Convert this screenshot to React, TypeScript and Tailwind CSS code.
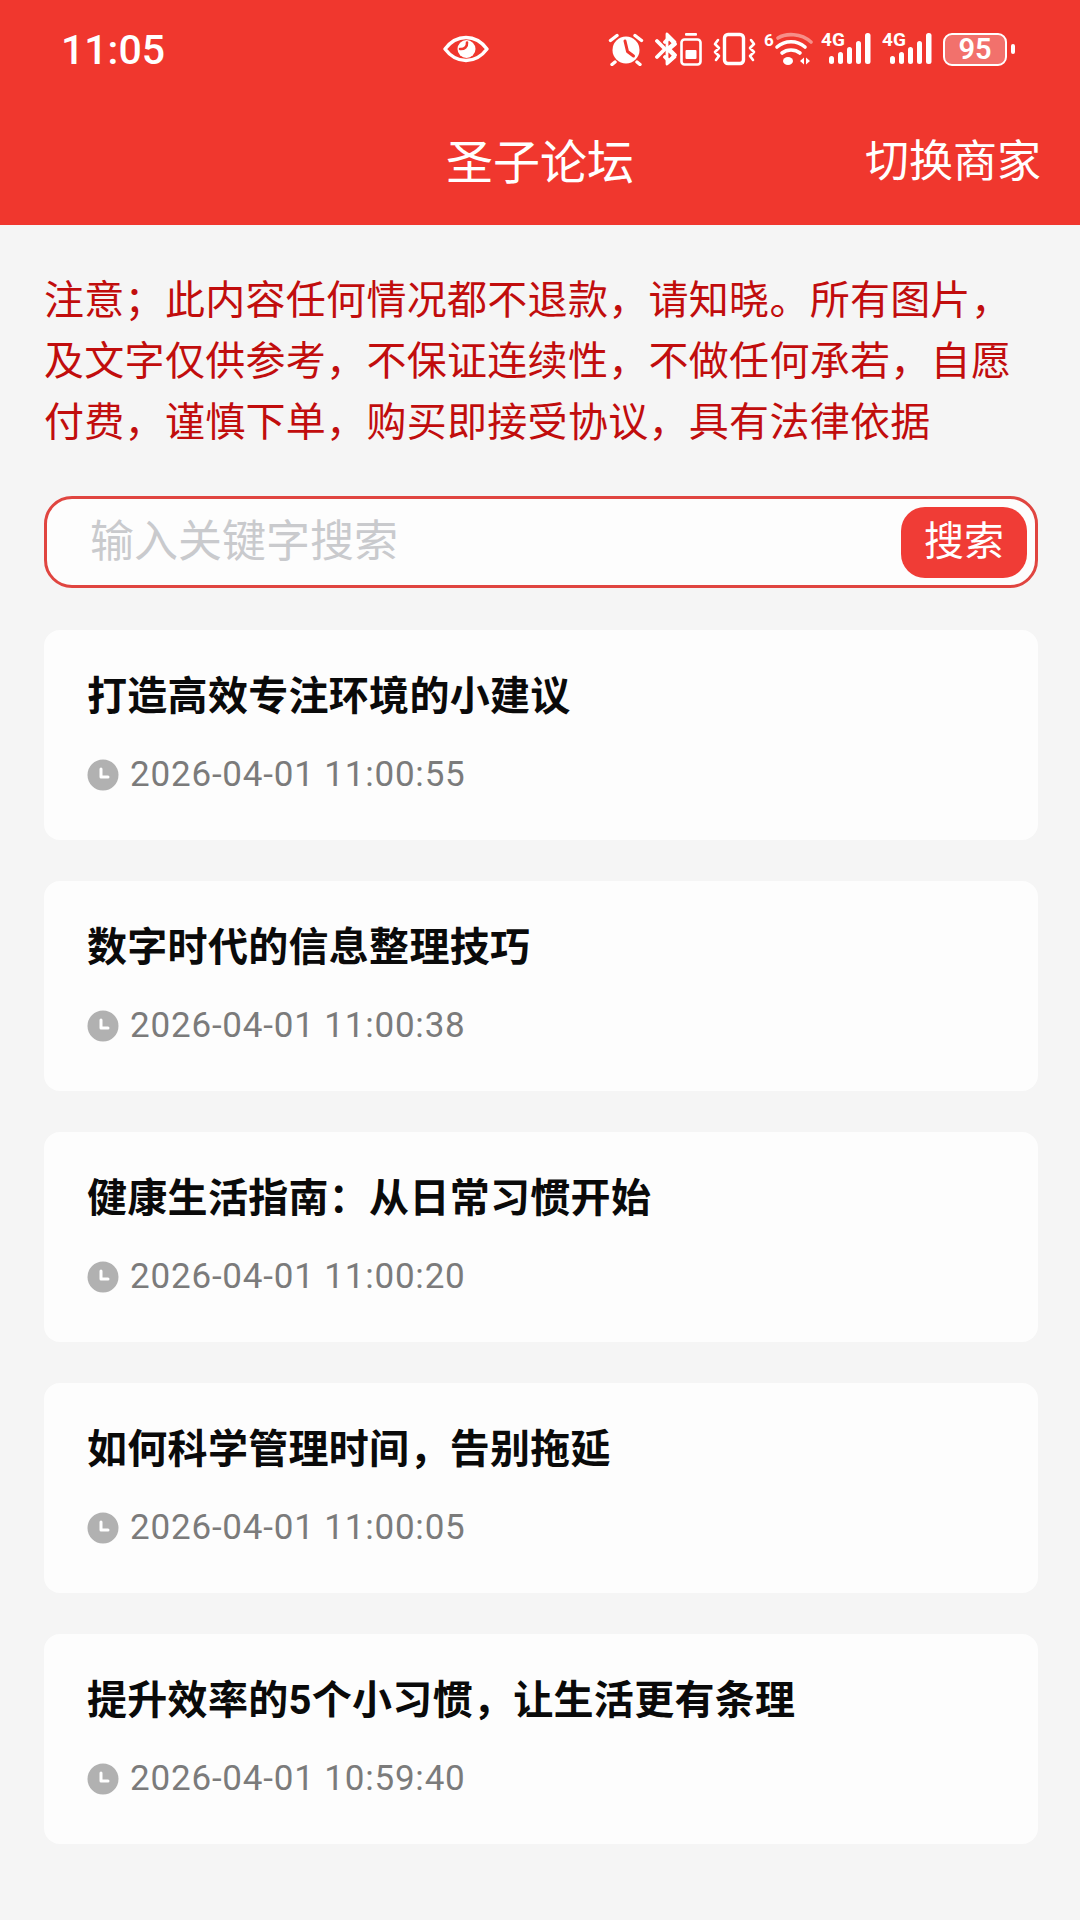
const posts = [
  { title: '打造高效专注环境的小建议', time: '2026-04-01 11:00:55' },
  { title: '数字时代的信息整理技巧', time: '2026-04-01 11:00:38' },
  { title: '健康生活指南：从日常习惯开始', time: '2026-04-01 11:00:20' },
  { title: '如何科学管理时间，告别拖延', time: '2026-04-01 11:00:05' },
  { title: '提升效率的5个小习惯，让生活更有条理', time: '2026-04-01 10:59:40' },
];

const RED = '#f0372e';

function EyeIcon() {
  return (
    <svg width="46" height="28" viewBox="0 0 46 28" fill="none">
      <path d="M2 14C8 6 15 2.500 23 2.500S38 6 44 14c-6 8-13 11.500-21 11.500S8 22 2 14Z" stroke="white" strokeWidth="3.400" strokeLinejoin="round" />
      <circle cx="23.500" cy="14" r="9" fill="white" />
      <path d="M24 7.500c.5 4-2.500 7-7 6.500" stroke={RED} strokeWidth="2.600" strokeLinecap="round" />
    </svg>
  );
}

function AlarmIcon() {
  return (
    <svg width="37" height="34" viewBox="0 0 37 34" fill="none">
      <circle cx="18" cy="18" r="13.500" fill="white" />
      <path d="M17 9l2.500 10.500 6 4.500" stroke={RED} strokeWidth="3" strokeLinecap="round" strokeLinejoin="round" />
      <path d="M2.500 8.500L9 3.500M33.500 8.500L27 3.500M7 30l-3 2.500M29 30l3 2.500" stroke="white" strokeWidth="3.400" strokeLinecap="round" />
    </svg>
  );
}

function BluetoothBatteryIcon() {
  return (
    <svg width="47" height="34" viewBox="0 0 47 34" fill="none">
      <path d="M2 9l8 8-8 8M10 10l4-4 6 6-6 5 6 6-6 6-4-4" stroke="white" strokeWidth="3.800" strokeLinejoin="round" strokeLinecap="round" />
      <path d="M12 2l8 8-8 7 8 8-8 7Z" stroke="white" strokeWidth="2.800" strokeLinejoin="round" />
      <rect x="26.500" y="7.500" width="19" height="25" rx="3" stroke="white" strokeWidth="2.600" />
      <rect x="30" y="1" width="12" height="2.800" rx="1" fill="white" />
      <rect x="30.500" y="18" width="11" height="9" rx="1" fill="white" />
    </svg>
  );
}

function VibrateIcon() {
  return (
    <svg width="43" height="34" viewBox="0 0 43 34" fill="none">
      <rect x="11.500" y="2.500" width="19" height="29" rx="3.500" stroke="white" strokeWidth="3.400" />
      <path d="M5 8L2 12l4 4-4 4 4 4-3 4M38 8l3 4-4 4 4 4-4 4 3 4" stroke="white" strokeWidth="2.600" strokeLinejoin="round" strokeLinecap="round" />
    </svg>
  );
}

function WifiIcon() {
  return (
    <svg width="49" height="42" viewBox="0 -4 49 42" fill="none">
      <text x="0" y="14" fill="white" fontSize="17" fontWeight="700" fontFamily="Roboto, sans-serif">6</text>
      <path d="M14 6C22 1 37 1 47 10" stroke="#f68f89" strokeWidth="3.600" strokeLinecap="round" />
      <path d="M13 15c8-7 20-7 28 0" stroke="white" strokeWidth="3.600" strokeLinecap="round" />
      <path d="M18 21c5-4 13-4 18 0" stroke="white" strokeWidth="3.600" strokeLinecap="round" />
      <ellipse cx="24" cy="29" rx="5" ry="4" fill="white" />
      <path d="M36 29l4-3.500v7ZM42 25.500l4 3.500-4 3.500Z" fill="white" />
    </svg>
  );
}

function SignalIcon() {
  return (
    <svg width="50" height="42" viewBox="0 -4 50 42" fill="none">
      <text x="0" y="14" fill="white" fontSize="19" fontWeight="700" fontFamily="Roboto, sans-serif">4G</text>
      <rect x="8" y="24" width="5" height="8" rx="2.500" fill="white" />
      <rect x="17" y="20" width="5" height="12" rx="2.500" fill="white" />
      <rect x="26" y="15" width="5" height="17" rx="2.500" fill="white" />
      <rect x="35" y="9" width="5" height="23" rx="2.500" fill="white" />
      <rect x="44" y="1" width="5.500" height="31" rx="2.500" fill="white" />
    </svg>
  );
}

function ClockIcon() {
  return (
    <svg width="32" height="32" viewBox="0 0 32 32" fill="none" className="shrink-0">
      <circle cx="16" cy="16" r="15.500" fill="#b1b1b1" />
      <path d="M14 10v8h7" stroke="white" strokeWidth="3" strokeLinecap="round" strokeLinejoin="round" />
    </svg>
  );
}

function StatusBar() {
  return (
    <div className="flex h-[98px] items-center text-white">
      <span className="ml-[61px] w-[382px] pt-[2px] font-['Roboto',sans-serif] text-[41px] leading-none font-medium">11:05</span>
      <EyeIcon />
      <div className="ml-[119px] flex items-center">
        <AlarmIcon />
        <div className="ml-[10px]"><BluetoothBatteryIcon /></div>
        <div className="ml-[11px]"><VibrateIcon /></div>
        <div className="ml-[8px]"><WifiIcon /></div>
        <div className="ml-[8px]"><SignalIcon /></div>
        <div className="ml-[11px]"><SignalIcon /></div>
        <div className="ml-[11px] flex items-center gap-[4px]">
          <div className="flex h-[33px] w-[64px] items-center justify-center rounded-[9px] border-[2.500px] border-white bg-[#f2716c] font-['Roboto',sans-serif] text-[29px] leading-none font-semibold">
            95
          </div>
          <div className="h-[10px] w-[4px] rounded-full bg-white" />
        </div>
      </div>
    </div>
  );
}

function SearchBar() {
  return (
    <div className="mt-[43px] mr-[42px] ml-[44px] flex h-[92px] items-center justify-between rounded-[28px] border-[3px] border-[#e04540] bg-[#fdfdfd] pr-[8px] pl-[43px]">
      <span className="text-[44px] text-[#c9cacd]">输入关键字搜索</span>
      <button className="flex h-[71px] w-[126px] items-center justify-center rounded-[24px] bg-[#f03c36] text-[40px] text-white">
        搜索
      </button>
    </div>
  );
}

export default function App() {
  return (
    <div className="flex h-[1920px] w-[1080px] flex-col overflow-hidden bg-[#f5f5f5] font-['Roboto','Noto_Sans_CJK_SC',sans-serif]">
      <header className="h-[225px] bg-[#f0372e]">
        <StatusBar />
        <div className="relative flex h-[127px] items-center justify-center pt-[1px] text-white">
          <span className="text-[47px] leading-none">圣子论坛</span>
          <span className="absolute right-[39px] text-[44px] leading-none">切换商家</span>
        </div>
      </header>

      <p className="mt-[45px] ml-[44px] text-[40px] leading-[61px] tracking-[0.3px] text-[#c10d0d]">
        注意；此内容任何情况都不退款，请知晓。所有图片，
        <br />
        及文字仅供参考，不保证连续性，不做任何承若，自愿
        <br />
        付费，谨慎下单，购买即接受协议，具有法律依据
      </p>

      <SearchBar />

      <div className="mt-[42px] mr-[42px] ml-[44px] flex flex-col gap-[41px]">
        {posts.map((post) => (
          <div key={post.time} className="flex h-[210px] flex-col rounded-[16px] bg-[#fdfdfd] pt-[40px] pl-[43px]">
            <h3 className="text-[40px] leading-[54px] tracking-[0.3px] font-bold text-[#0a0a0a]">{post.title}</h3>
            <div className="mt-[29px] flex items-center gap-[11px]">
              <ClockIcon />
              <span className="text-[35px] leading-[44px] tracking-[0.8px] text-[#7b7b7b]">{post.time}</span>
            </div>
          </div>
        ))}
      </div>
    </div>
  );
}
